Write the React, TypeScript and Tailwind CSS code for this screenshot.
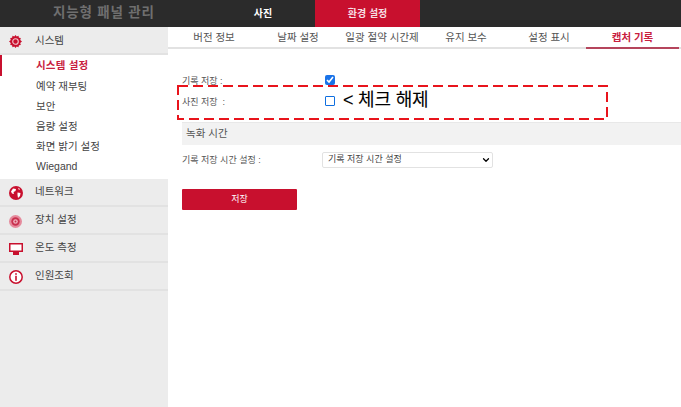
import React from "react";
import { ChevronDown } from "lucide-react";

const kr = { fontFamily: '"Liberation Sans", "Noto Sans CJK KR", sans-serif' };

const GearIcon = () => (
  <svg width="13" height="13" viewBox="0 0 14 14">
    <path
      fill="#c8102e"
      d="M7 0l1.3 1.6 1.9-.7.5 2 2 .4-.6 2L14 7l-1.9 1.7.6 2-2 .4-.5 2-1.9-.7L7 14l-1.3-1.6-1.9.7-.5-2-2-.4.6-2L0 7l1.9-1.7-.6-2 2-.4.5-2 1.9.7z"
    />
    <circle cx="7" cy="7" r="3" fill="none" stroke="#f3c6ce" strokeWidth="1.2" />
  </svg>
);

const GlobeIcon = () => (
  <svg width="14" height="14" viewBox="0 0 14 14">
    <circle cx="7" cy="7" r="7" fill="#c8102e" />
    <path fill="#fff" d="M4 2.5l3 .5-.5 2-2 1 .5 2-2-.5-1-2zM8.5 6.5l3 .5-.5 3-2 2-.5-3zM9 1.8l2 1.2-1 1z" />
  </svg>
);

const TargetIcon = () => (
  <svg width="13" height="13" viewBox="0 0 14 14">
    <circle cx="7" cy="7" r="7" fill="#e58a9c" />
    <circle cx="7" cy="7" r="4.5" fill="#c8304e" />
    <circle cx="7" cy="7" r="2.5" fill="#eeb2be" />
    <circle cx="7" cy="7" r="1" fill="#c8304e" />
  </svg>
);

const MonitorIcon = () => (
  <svg width="14" height="12" viewBox="0 0 14 12">
    <rect x="0.75" y="0.75" width="12.5" height="7.5" fill="#fff" stroke="#c8102e" strokeWidth="1.5" />
    <rect x="4" y="9" width="6" height="3" fill="#c8102e" />
  </svg>
);

const InfoIcon = () => (
  <svg width="14" height="14" viewBox="0 0 14 14">
    <circle cx="7" cy="7" r="6.2" fill="#fff" stroke="#c8102e" strokeWidth="1.5" />
    <rect x="6.2" y="5.8" width="1.6" height="5" fill="#c8102e" />
    <rect x="6.2" y="3.2" width="1.6" height="1.6" fill="#c8102e" />
  </svg>
);

const subItems = ["시스템 설정", "예약 재부팅", "보안", "음량 설정", "화면 밝기 설정", "Wiegand"];
const tabs = ["버전 정보", "날짜 설정", "일광 절약 시간제", "유지 보수", "설정 표시", "캡처 기록"];

const NavHead = ({ icon, label, textClass = "" }: { icon: React.ReactNode; label: string; textClass?: string }) => (
  <div className="flex items-center bg-[#ececec] border-b-2 border-[#e2e2e2] h-[28px]">
    <div className="w-[31px] mr-[4px] pt-[2px] flex justify-center">{icon}</div>
    <span className={`text-[10.5px] text-[#444] ${textClass}`}>{label}</span>
  </div>
);

export default function App() {
  return (
    <div className="w-[681px] h-[407px] overflow-hidden bg-white flex flex-col relative" style={kr}>
      <header className="h-[27px] bg-[#2b2b2b] flex shrink-0">
        <div className="w-[211px] pl-[53px] flex items-center text-[13.5px] font-bold tracking-[0.8px] text-[#6f6f6f]">
          지능형 패널 관리
        </div>
        <div className="w-[104px] flex items-center justify-center text-[10px] font-bold text-white">사진</div>
        <div className="w-[105px] bg-[#c8102e] flex items-center justify-center text-[10px] font-bold text-[#f6dfe3]">
          환경 설정
        </div>
      </header>

      <div className="flex flex-1 min-h-0">
        <aside className="w-[168px] bg-[#ececec] shrink-0 flex flex-col">
          <NavHead icon={<GearIcon />} label="시스템" textClass="pt-[1px]" />
          <ul className="bg-white pb-[3px]">
            {subItems.map((s, i) => (
              <li
                key={s}
                className={
                  i === 0
                    ? "h-[21px] pl-[34px] pt-[1px] flex items-center text-[10.5px] tracking-[0.2px] font-bold text-[#c8203e] border-l-2 border-[#c8102e]"
                    : "h-[20px] pl-[36px] pt-[2px] flex items-center text-[10.5px] text-[#444]"
                }
              >
                {s}
              </li>
            ))}
          </ul>
          <NavHead icon={<GlobeIcon />} label="네트워크" />
          <NavHead icon={<TargetIcon />} label="장치 설정" />
          <NavHead icon={<MonitorIcon />} label="온도 측정" />
          <NavHead icon={<InfoIcon />} label="인원조회" />
        </aside>

        <main className="flex-1 min-w-0 flex flex-col">
          <nav className="h-[22px] border-b-2 border-[#e2e2e2] flex pl-[4px] shrink-0">
            {tabs.map((t, i) => (
              <div
                key={t}
                className={
                  i === 5
                    ? "w-[93px] -mb-[2px] pt-[1px] flex items-center justify-center text-[10.5px] font-bold text-[#c8203e] border-b-2 border-[#b5455c]"
                    : i === 4
                      ? "w-[78px] pl-[4px] pt-[1px] flex items-center justify-center text-[10.5px] text-[#555]"
                      : "w-[84px] pt-[1px] flex items-center justify-center text-[10.5px] text-[#555]"
                }
              >
                {t}
              </div>
            ))}
          </nav>

          <div className="mt-[25px] pl-[14px] h-[16px] flex items-center">
            <span className="w-[143px] text-[9px] text-[#555]">기록 저장 :</span>
            <input type="checkbox" defaultChecked className="w-[10px] h-[10px] mb-[5px] accent-[#1a73e8]" />
          </div>
          <div className="mt-[5px] pl-[14px] h-[16px] flex items-center">
            <span className="w-[143px] text-[9px] text-[#555]">사진 저장&nbsp; :</span>
            <span className="w-[10px] h-[10px] mb-[5px] border border-[#0f6fe0] rounded-[1px] bg-white" />
            <span className="ml-[8px] mb-[7px] text-[18px] font-normal tracking-[-0.2px] leading-none text-black [-webkit-text-stroke:0.1px_black]">
              &lt; 체크 해제
            </span>
          </div>

          <div className="mt-[11px] h-[23px] ml-[14px] bg-[#f2f2f2] border-t border-[#e8e8e8] flex items-center pl-[4px] text-[10.5px] text-[#555]">
            녹화 시간
          </div>

          <div className="mt-[7px] pl-[14px] flex items-center h-[16px]">
            <span className="w-[140px] pt-[1px] text-[9px] text-[#555]">기록 저장 시간 설정 :</span>
            <div className="relative w-[171px] h-[16px]">
              <select className="block appearance-none w-full h-full border border-[#e2e2e2] bg-white text-[9px] text-[#444] pl-[5px] rounded-[2px]">
                <option>기록 저장 시간 설정</option>
              </select>
              <ChevronDown
                size={10}
                strokeWidth={3}
                className="absolute right-[2px] top-[3px] text-black pointer-events-none"
              />
            </div>
          </div>

          <button className="mt-[21px] ml-[14px] w-[115px] h-[21px] bg-[#c8102e] text-white text-[9px] flex items-center justify-center rounded-[1px]">
            저장
          </button>
        </main>
      </div>

      <svg className="absolute left-[177px] top-[85px]" width="431" height="35" fill="none">
        <rect x="1" y="1" width="429" height="33" stroke="#e8141c" strokeWidth="2" strokeDasharray="10 5" />
      </svg>
    </div>
  );
}
